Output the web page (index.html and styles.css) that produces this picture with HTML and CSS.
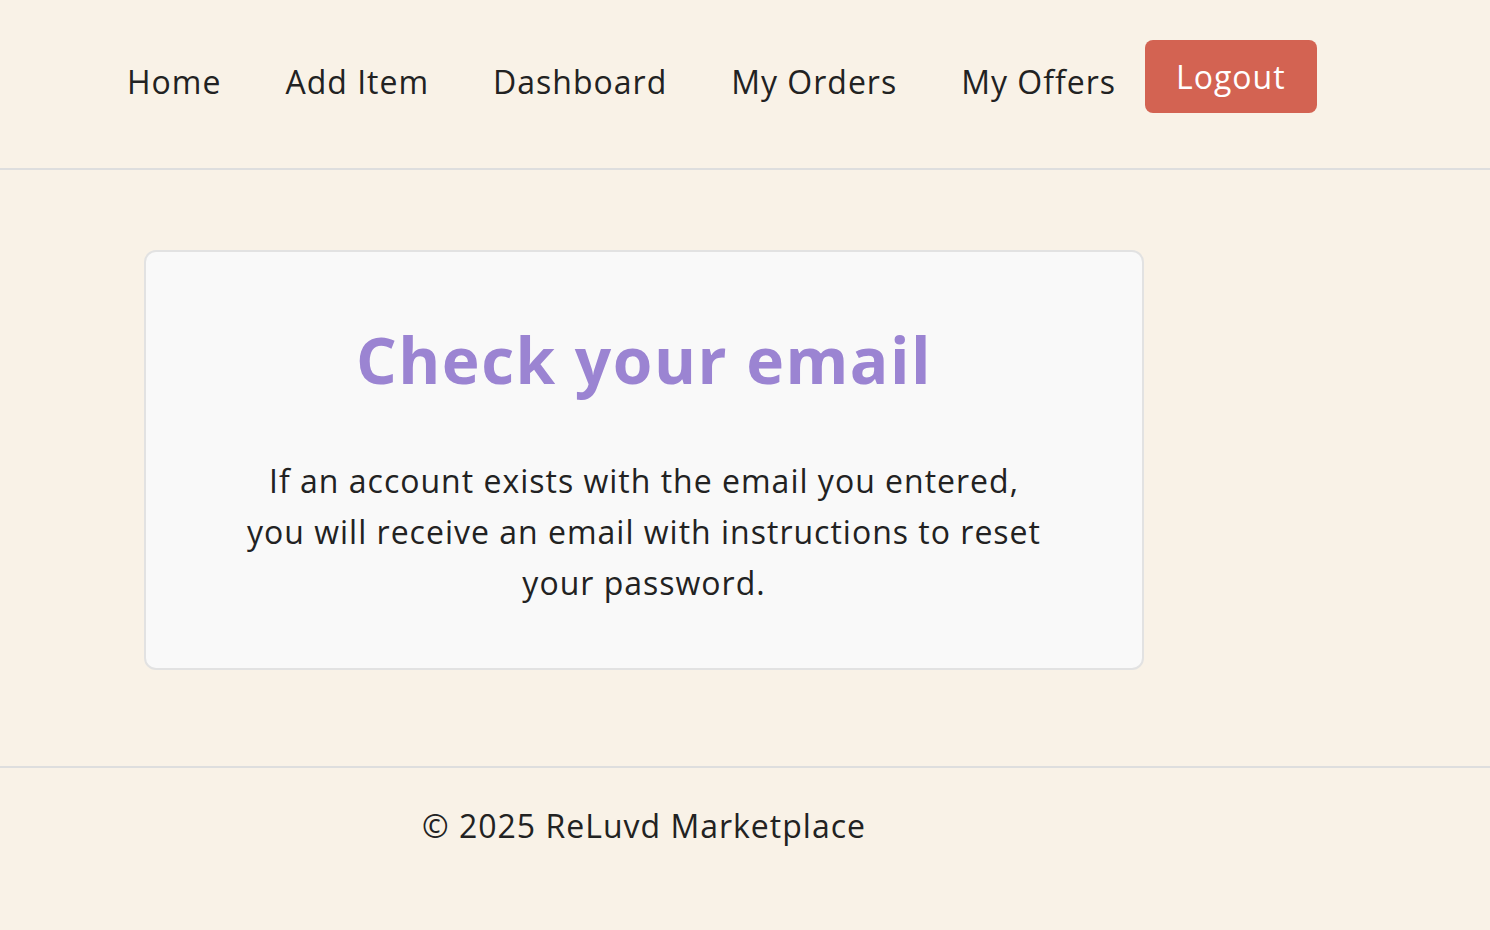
FILE: index.html
```html
<!DOCTYPE html>
<html lang="en">
<head>
<meta charset="utf-8">
<title>Check your email - ReLuvd Marketplace</title>
<link rel="stylesheet" href="styles.css">
</head>
<body>
<header class="site-header">
  <nav class="nav">
    <a class="nav-link" href="#">Home</a>
    <a class="nav-link" href="#">Add Item</a>
    <a class="nav-link" href="#">Dashboard</a>
    <a class="nav-link" href="#">My Orders</a>
    <a class="nav-link" href="#">My Offers</a>
    <button class="logout-btn" type="button">Logout</button>
  </nav>
</header>
<main class="main">
  <section class="card">
    <h1 class="card-title">Check your email</h1>
    <p class="card-text">If an account exists with the email you entered, you will receive an email with instructions to reset your password.</p>
  </section>
</main>
<footer class="site-footer">
  <p class="footer-text">© 2025 ReLuvd Marketplace</p>
</footer>
</body>
</html>
```
FILE: styles.css
```css
* { box-sizing: border-box; }
html, body { margin: 0; padding: 0; }
body {
  background: #f9f2e7;
  color: #222;
  font-family: "Open Sans", "Liberation Sans", sans-serif;
  font-size: 32px;
  line-height: 1.6;
  letter-spacing: 1px;
  min-height: 930px;
}
.site-header {
  border-bottom: 2px solid #dedede;
  height: 170px;
  padding: 40px 0 0 95px;
}
.nav {
  display: flex;
  align-items: flex-start;
}
.nav-link {
  color: #222;
  text-decoration: none;
  padding: 16px 32px 0;
  line-height: 1.6;
}
.logout-btn {
  font: inherit;
  letter-spacing: 1px;
  line-height: 1.6;
  color: #fff;
  background: #d36352;
  border: none;
  border-radius: 8px;
  padding: 11px 31px;
  margin-left: -3px;
  cursor: pointer;
}
.main {
  padding: 80px 0 96px 144px;
}
.card {
  width: 1000px;
  background: #f9f9f9;
  border: 2px solid #e2e2e2;
  border-radius: 12px;
  padding: 70px 98px 60px;
  text-align: center;
}
.card-title {
  margin: 0 0 56px;
  color: #9b84d2;
  font-size: 64px;
  font-weight: 700;
  line-height: 1.2;
  letter-spacing: 1.5px;
}
.card-text {
  margin: 0;
}
.site-footer {
  border-top: 2px solid #dedede;
  padding: 32px 0 0 144px;
}
.footer-text {
  width: 1000px;
  margin: 0;
  text-align: center;
}
```
